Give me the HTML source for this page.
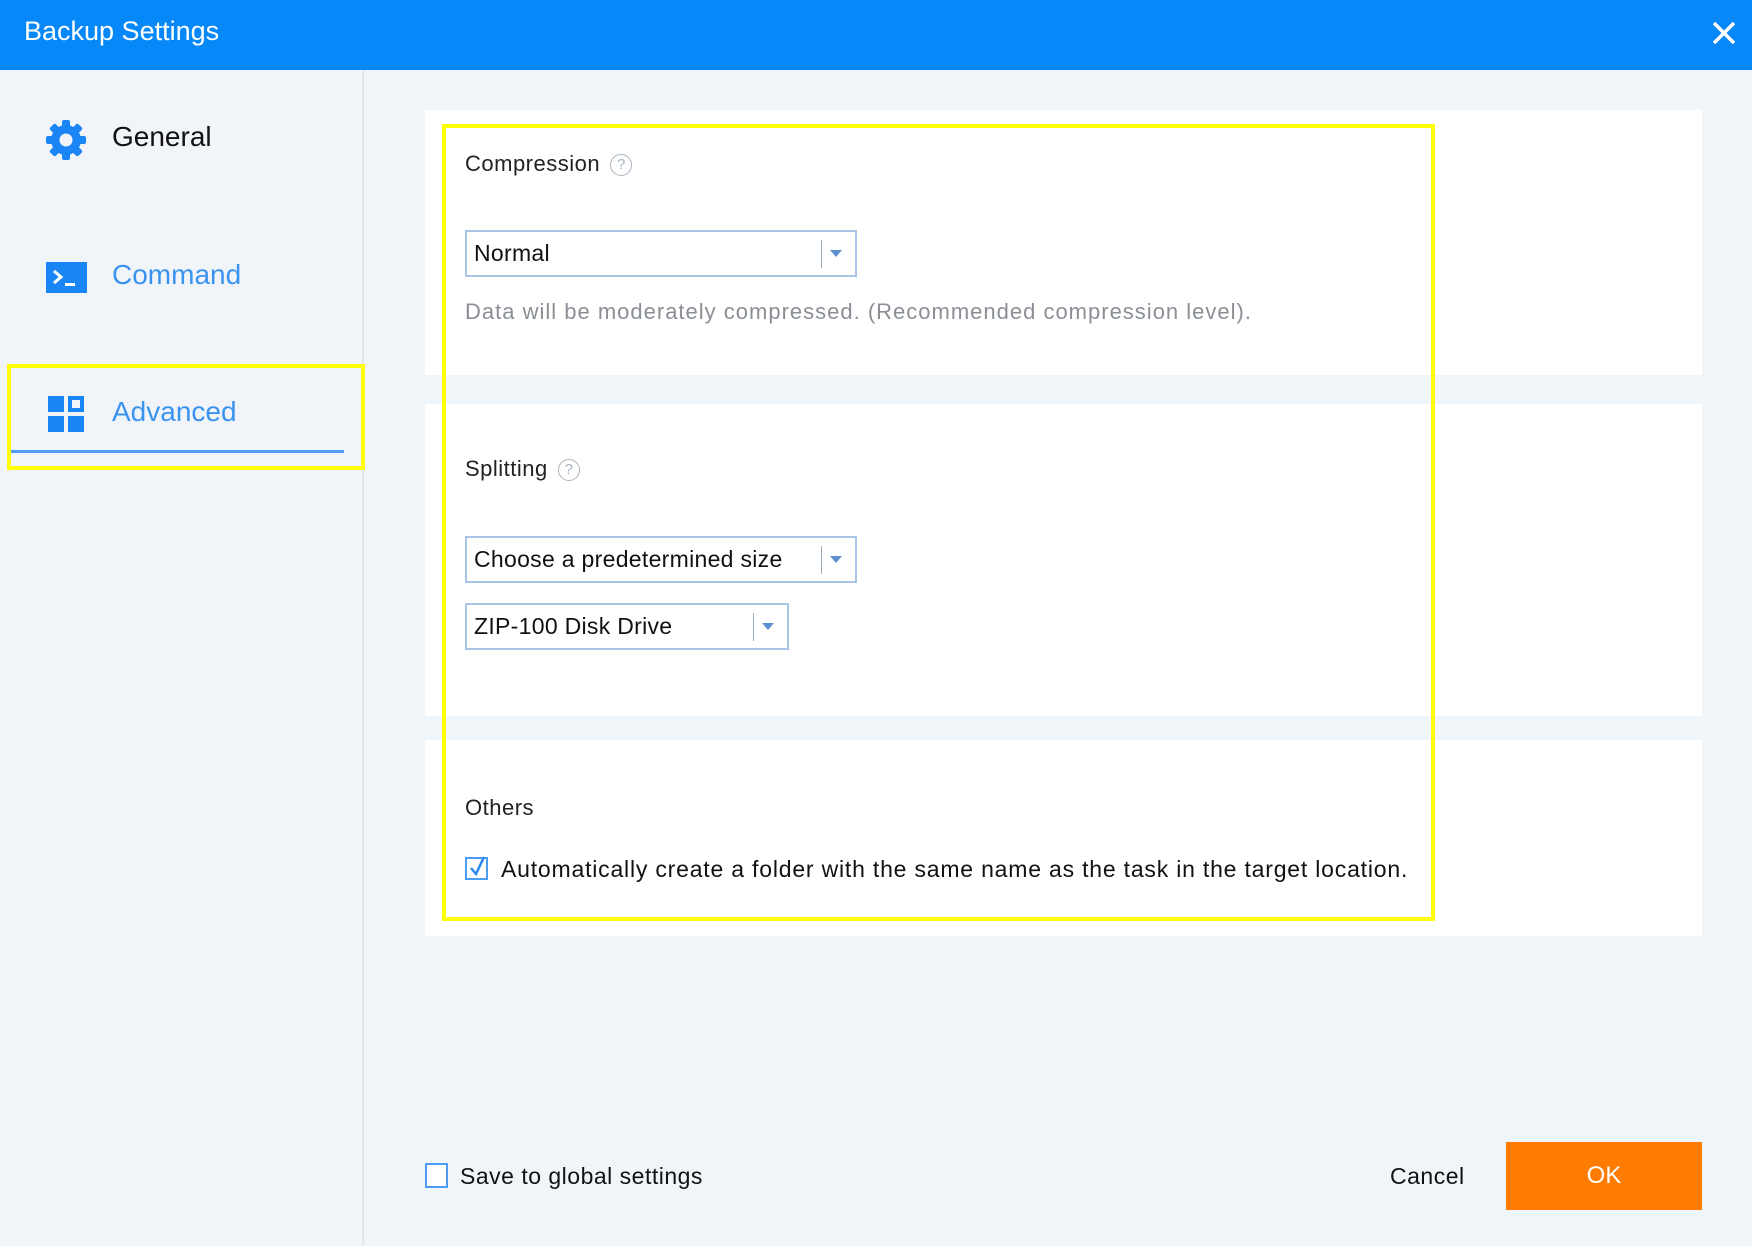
<!DOCTYPE html>
<html><head><meta charset="utf-8"><style>
*{margin:0;padding:0;box-sizing:border-box}
body{width:1752px;height:1246px;background:#f0f5fa;font-family:"Liberation Sans",sans-serif;position:relative;overflow:hidden;color:#222}
.abs{position:absolute}
.title{left:0;top:0;width:1752px;height:70px;background:#0788f9}
.title span{position:absolute;left:24px;top:16px;color:#fff;font-size:27px}
.side{left:0;top:70px;width:364px;height:1176px;background:#f1f5f9;border-right:2px solid #e1e6ec}
.nav{font-size:28px;left:112px}
.card{left:425px;width:1277px;background:#fff}
.lbl{font-size:22px;left:465px;color:#222;letter-spacing:0.5px}
.sel{left:465px;height:47px;border:2px solid #a8c4e6;background:#fff;font-size:23px;padding-left:7px;line-height:43px;color:#111;letter-spacing:0.3px}
.sel .d{position:absolute;top:8px;width:1px;height:28px;background:#9ab}
.sel .a{position:absolute;top:18px;width:0;height:0;border-left:6px solid transparent;border-right:6px solid transparent;border-top:7px solid #5b8fcf}
.q{display:inline-block;width:22px;height:22px;border:1.5px solid #aab4c0;border-radius:50%;color:#aab4c0;font-size:15px;text-align:center;line-height:19px;vertical-align:middle;margin-left:10px;letter-spacing:0}
</style></head><body>
<div class="abs title"><span>Backup Settings</span>
<svg class="abs" style="left:1711px;top:20px" width="26" height="26" viewBox="0 0 26 26"><path d="M3 3L23 23M23 3L3 23" stroke="#fff" stroke-width="3.5"/></svg></div>
<div class="abs side"></div>
<svg class="abs" style="left:44px;top:118px" width="44" height="44" viewBox="0 0 44 44"><g fill="#1a86f5"><circle cx="22" cy="22" r="15"/><g id="t"><rect x="18" y="2" width="8" height="8" rx="2"/><rect x="18" y="34" width="8" height="8" rx="2"/></g><use href="#t" transform="rotate(45 22 22)"/><use href="#t" transform="rotate(90 22 22)"/><use href="#t" transform="rotate(135 22 22)"/></g><circle cx="22" cy="22" r="6.5" fill="#f1f5f9"/></svg>
<div class="abs nav" style="top:121px;color:#111">General</div>
<svg class="abs" style="left:46px;top:262px" width="41" height="31" viewBox="0 0 41 31"><rect width="41" height="31" fill="#1a86f5"/><path d="M8 9l7 6-7 6" stroke="#fff" stroke-width="3" fill="none"/><rect x="19" y="21" width="10" height="3" fill="#fff"/></svg>
<div class="abs nav" style="top:259px;color:#3b93f0">Command</div>
<svg class="abs" style="left:48px;top:396px" width="38" height="38" viewBox="0 0 38 38"><g fill="#1a86f5"><rect x="0" y="0" width="16" height="16"/><rect x="20" y="0" width="16" height="16"/><rect x="0" y="20" width="16" height="16"/><rect x="20" y="20" width="16" height="16"/></g><rect x="24" y="4" width="8" height="8" fill="#f1f5f9"/></svg>
<div class="abs nav" style="top:396px;color:#3b93f0">Advanced</div>
<div class="abs" style="left:11px;top:450px;width:333px;height:3px;background:#4b9cf2"></div>
<div class="abs" style="left:7px;top:364px;width:358px;height:106px;border:4px solid #ffff0a"></div>

<div class="abs card" style="top:110px;height:265px"></div>
<div class="abs card" style="top:404px;height:312px"></div>
<div class="abs card" style="top:740px;height:196px"></div>

<div class="abs lbl" style="top:151px">Compression<span class="q">?</span></div>
<div class="abs sel" style="top:230px;width:392px">Normal<div class="d" style="left:354px"></div><div class="a" style="left:363px"></div></div>
<div class="abs" style="left:465px;top:299px;font-size:22px;color:#8a8f96;letter-spacing:1px">Data will be moderately compressed. (Recommended compression level).</div>
<div class="abs lbl" style="top:456px">Splitting<span class="q">?</span></div>
<div class="abs sel" style="top:536px;width:392px">Choose a predetermined size<div class="d" style="left:354px"></div><div class="a" style="left:363px"></div></div>
<div class="abs sel" style="top:603px;width:324px">ZIP-100 Disk Drive<div class="d" style="left:286px"></div><div class="a" style="left:295px"></div></div>
<div class="abs lbl" style="top:795px">Others</div>
<svg class="abs" style="left:465px;top:856px" width="24" height="25" viewBox="0 0 24 25"><rect x="1" y="2" width="21" height="21" fill="none" stroke="#4b9cf2" stroke-width="2"/><path d="M6 12l5 6 8-17" stroke="#2d86ee" stroke-width="2.5" fill="none"/></svg>
<div class="abs" style="left:501px;top:856px;font-size:23px;color:#111;letter-spacing:0.8px">Automatically create a folder with the same name as the task in the target location.</div>
<div class="abs" style="left:442px;top:124px;width:993px;height:797px;border:4px solid #ffff0a"></div>

<div class="abs" style="left:425px;top:1163px;width:23px;height:25px;border:2px solid #4b9cf2;background:#fff"></div>
<div class="abs" style="left:460px;top:1163px;font-size:23px;color:#111;letter-spacing:0.5px">Save to global settings</div>
<div class="abs" style="left:1390px;top:1163px;font-size:23px;color:#111;letter-spacing:0.5px">Cancel</div>
<div class="abs" style="left:1506px;top:1142px;width:196px;height:68px;background:#ff7c00;color:#fff;font-size:24px;text-align:center;line-height:68px">OK</div>
</body></html>
